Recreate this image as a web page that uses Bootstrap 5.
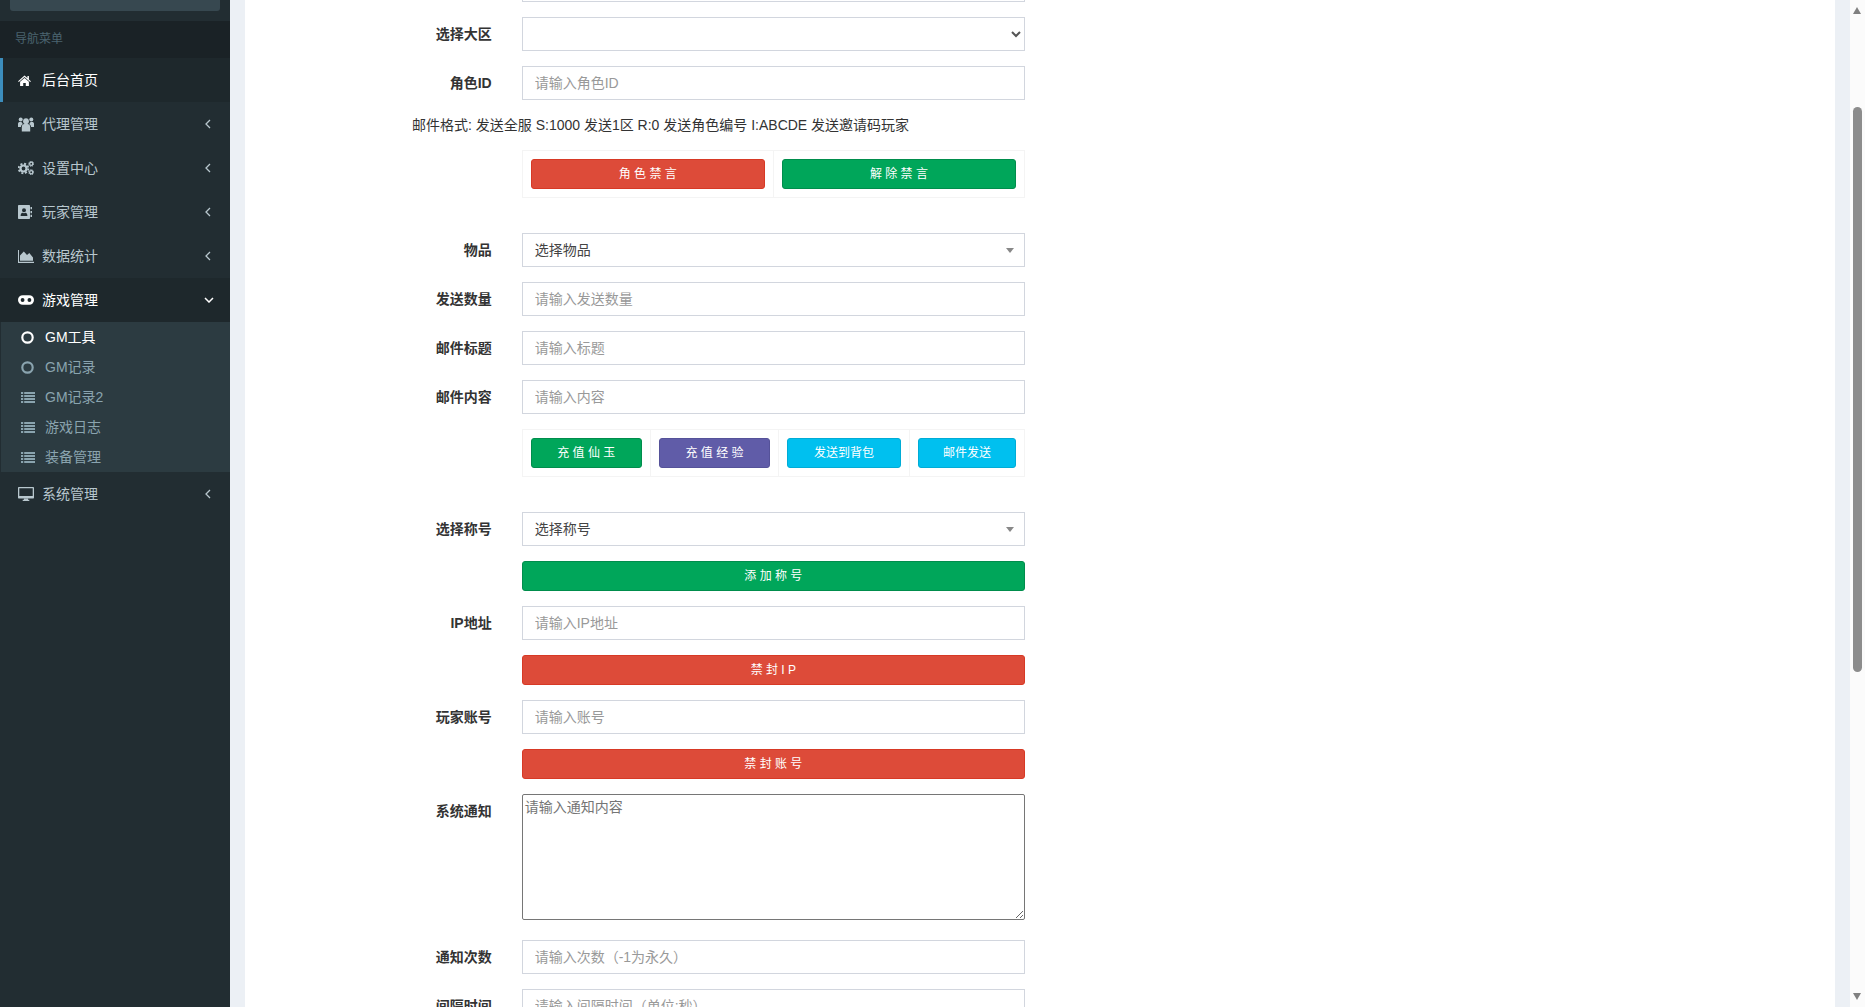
<!DOCTYPE html>
<html lang="zh-CN">
<head>
<meta charset="utf-8">
<title>GM工具</title>
<link href="https://cdn.jsdelivr.net/npm/bootstrap@5.3.0/dist/css/bootstrap.min.css" rel="stylesheet">
<style>
html,body{height:100%;overflow:hidden}
body{font-family:"Liberation Sans","Noto Sans CJK SC",sans-serif;font-size:14px;line-height:20px;color:#333;background:#ecf0f5}
.app-shell{height:1007px;overflow:hidden}
.side-rail{width:230px;flex:none;background:#222d32}
.side-search{height:34px;margin:-23px 10px 10px;background:#374850;border-radius:3px}
.side-head{background:#1a2226;color:#4b646f;font-size:12px;line-height:17px;padding:10px 25px 10px 15px}
.side-list{list-style:none;margin:0;padding:0}
.side-link{height:44px;padding:12px 0 12px 15px;color:#b8c7ce;text-decoration:none;border-left:3px solid transparent;margin:0}
.side-link.is-current{background:#1e282c;color:#fff;border-left-color:#3c8dbc}
.side-link.is-open{background:#1e282c;color:#fff;border-left-color:#1e282c}
.ico-box{width:24px;flex:none;display:flex;align-items:center}
.ico-box svg{display:block;fill:currentColor}
.side-arrow{margin-left:auto;margin-right:19px;display:block}
.side-arrow.is-down{margin-right:16px}
.sub-list{list-style:none;margin:0 0 0 1px;padding:0;background:#2c3b41}
.sub-link{height:30px;padding:5px 5px 5px 20px;color:#8aa4af;text-decoration:none}
.sub-link.is-current{color:#fff}
.main-gutter{padding:0 15px;min-width:0;background:#ecf0f5}
.work-box{background:#fff;padding:0 10px;height:1007px;overflow:hidden}
.work-form{margin-top:-32px}
.work-form .row{--bs-gutter-x:30px;margin-bottom:15px}
.field-label{font-weight:700;text-align:right;padding-top:7px;margin:0;color:#333}
.field-input.form-control{height:34px;border-radius:0;border:1px solid #d2d6de;padding:6px 12px;font-size:14px;line-height:20px;color:#444;box-shadow:none}
.field-input::placeholder{color:#999;opacity:1}
select.field-input.form-control{appearance:auto;padding:6px 8px;background:#fff;color:#555}
.fake-select{display:flex;align-items:center;justify-content:space-between;padding-right:10px}
.field-input.fake-select.form-control{padding-right:10px}
.fake-caret{width:0;height:0;border-style:solid;border-width:5px 4px 0;border-color:#888 transparent transparent}
.mail-hint{margin:0 0 15px;padding-left:157px}
.btn-table{--bs-table-border-color:#f4f4f4;border-color:#f4f4f4;margin-bottom:20px}
.btn-table td{padding:8px;vertical-align:top}
.act-btn{display:block;width:100%;height:30px;padding:5px 10px;font-size:12px;line-height:18px;border-radius:3px;color:#fff;white-space:nowrap}
.act-red{background:#dd4b39;border:1px solid #d73925}
.act-green{background:#00a65a;border:1px solid #008d4c}
.act-purple{background:#605ca8;border:1px solid #555299}
.act-cyan{background:#00c0ef;border:1px solid #00acd6}
.act-btn:hover{color:#fff}
.notice-area{display:block;width:100%;height:126px;padding:2px;margin-bottom:5px;border:1px solid #767676;border-radius:2px;font-size:14px;line-height:20px;color:#333}
.notice-area::placeholder{color:#757575;opacity:1}
.fake-scroll{width:15px;flex:none;background:#fbfbfb;height:1007px;padding:7px 3px}
.scroll-up{width:0;height:0;border-style:solid;border-width:0 4.5px 7px;border-color:transparent transparent #808080}
.scroll-down{width:0;height:0;border-style:solid;border-width:7px 4.5px 0;border-color:#808080 transparent transparent}
.scroll-thumb{width:9px;height:565px;margin-top:93px;margin-bottom:auto;background:#8c8c8c;border-radius:5px}
</style>
</head>
<body>
<svg width="0" height="0" class="d-none">
  <symbol id="i-home" viewBox="0 0 14 12"><path d="M7 .6 0 6.7l.8.9L7 2.200l6.200 5.400.8-.9-2.200-1.900V1.200h-1.600v2.200zM2.200 7.400 7 3.200l4.800 4.200V12H8.400V8.600H5.600V12H2.200z"/></symbol>
  <symbol id="i-users" viewBox="0 0 16 15"><circle cx="8" cy="4.200" r="2.900"/><circle cx="2.700" cy="2.400" r="2"/><circle cx="13.300" cy="2.400" r="2"/><path d="M3.800 14.500V10c0-2 1.200-3 2.600-3h3.200c1.400 0 2.600 1 2.600 3v4.500zM0 10V6.700C0 5.600.8 5 2 5h1.500c.3 1 .9 1.600 1.500 2-1.300.5-2 1.500-2.100 3zM16 10V6.700C16 5.600 15.200 5 14 5h-1.500c-.3 1-.9 1.600-1.500 2 1.300.5 2 1.500 2.100 3z"/></symbol>
  <symbol id="i-cogs" viewBox="0 0 16 14"><g fill="none" stroke="currentColor"><circle cx="5.500" cy="7.500" r="3" stroke-width="2.200"/><circle cx="5.500" cy="7.500" r="4.800" stroke-width="1.800" stroke-dasharray="2 1.770"/><circle cx="13.200" cy="2.800" r="1.600" stroke-width="1.300"/><circle cx="13.200" cy="2.800" r="2.500" stroke-width="1" stroke-dasharray="1.200 .76"/><circle cx="13.200" cy="11.200" r="1.600" stroke-width="1.300"/><circle cx="13.200" cy="11.200" r="2.500" stroke-width="1" stroke-dasharray="1.200 .76"/></g></symbol>
  <symbol id="i-book" viewBox="0 0 14 14"><path fill-rule="evenodd" d="M1 0h10c.6 0 1 .4 1 1v12c0 .6-.4 1-1 1H1c-.6 0-1-.4-1-1V1c0-.6.4-1 1-1zM6 3.300a2 2 0 1 0 0 4 2 2 0 0 0 0-4zM2.600 11h6.800c0-2-1-3.200-2-3.200-.4.300-.9.500-1.400.500s-1-.2-1.400-.5c-1 0-2 1.200-2 3.200z"/><path d="M12.500 2H14v2.300h-1.500zM12.500 5.900H14v2.300h-1.500zM12.500 9.800H14v2.300h-1.500z"/></symbol>
  <symbol id="i-area" viewBox="0 0 16 13"><path d="M0 0h1v11.800h15V13H0z"/><path d="M2 10.800V5.500L5.800 1.500 9 5l2.300-2L15 7.500v3.300z"/></symbol>
  <symbol id="i-pad" viewBox="0 0 15 9"><path fill-rule="evenodd" d="M4.500 0h6a4.500 4.500 0 0 1 0 9h-6a4.500 4.500 0 0 1 0-9zM4.300 2.700a1.800 1.800 0 1 0 0 3.600 1.800 1.800 0 0 0 0-3.600zM10.700 2.700a1.800 1.800 0 1 0 0 3.600 1.800 1.800 0 0 0 0-3.600z"/></symbol>
  <symbol id="i-ring" viewBox="0 0 12 12"><circle cx="6" cy="6" r="4.800" fill="none" stroke="currentColor" stroke-width="2"/></symbol>
  <symbol id="i-list" viewBox="0 0 14 11"><path d="M0 0h2.200v2H0zM3.200 0H14v2H3.200zM0 3h2.200v2H0zM3.200 3H14v2H3.200zM0 6h2.200v2H0zM3.200 6H14v2H3.200zM0 9h2.200v2H0zM3.200 9H14v2H3.200z"/></symbol>
  <symbol id="i-screen" viewBox="0 0 16 14"><path fill-rule="evenodd" d="M1 0h14c.6 0 1 .4 1 1v9.500c0 .6-.4 1-1 1H1c-.6 0-1-.4-1-1V1c0-.6.4-1 1-1zM1.300 1.300v7.700h13.400V1.300z"/><path d="M6 11.500h4v1.300h1.300V14H4.700v-1.200H6z"/></symbol>
  <symbol id="i-left" viewBox="0 0 6 10"><path d="M5 1 1 5l4 4" fill="none" stroke="currentColor" stroke-width="1.300"/></symbol>
  <symbol id="i-down" viewBox="0 0 10 6"><path d="M1 1l4 4 4-4" fill="none" stroke="currentColor" stroke-width="1.500"/></symbol>
</svg>
<div class="app-shell d-flex">
  <aside class="side-rail">
    <div class="side-search"></div>
    <div class="side-head">导航菜单</div>
    <ul class="side-list">
      <li><a class="side-link is-current d-flex align-items-center" href="#"><span class="ico-box"><svg width="13" height="11"><use href="#i-home"/></svg></span>后台首页</a></li>
      <li><a class="side-link d-flex align-items-center" href="#"><span class="ico-box"><svg width="16" height="15"><use href="#i-users"/></svg></span>代理管理<svg class="side-arrow" width="6" height="10"><use href="#i-left"/></svg></a></li>
      <li><a class="side-link d-flex align-items-center" href="#"><span class="ico-box"><svg width="16" height="14"><use href="#i-cogs"/></svg></span>设置中心<svg class="side-arrow" width="6" height="10"><use href="#i-left"/></svg></a></li>
      <li><a class="side-link d-flex align-items-center" href="#"><span class="ico-box"><svg width="14" height="14"><use href="#i-book"/></svg></span>玩家管理<svg class="side-arrow" width="6" height="10"><use href="#i-left"/></svg></a></li>
      <li><a class="side-link d-flex align-items-center" href="#"><span class="ico-box"><svg width="16" height="13"><use href="#i-area"/></svg></span>数据统计<svg class="side-arrow" width="6" height="10"><use href="#i-left"/></svg></a></li>
      <li><a class="side-link is-open d-flex align-items-center" href="#"><span class="ico-box"><svg width="16" height="10"><use href="#i-pad"/></svg></span>游戏管理<svg class="side-arrow is-down" width="10" height="6"><use href="#i-down"/></svg></a>
        <ul class="sub-list">
          <li><a class="sub-link is-current d-flex align-items-center" href="#"><span class="ico-box"><svg width="13" height="13"><use href="#i-ring"/></svg></span>GM工具</a></li>
          <li><a class="sub-link d-flex align-items-center" href="#"><span class="ico-box"><svg width="13" height="13"><use href="#i-ring"/></svg></span>GM记录</a></li>
          <li><a class="sub-link d-flex align-items-center" href="#"><span class="ico-box"><svg width="14" height="11"><use href="#i-list"/></svg></span>GM记录2</a></li>
          <li><a class="sub-link d-flex align-items-center" href="#"><span class="ico-box"><svg width="14" height="11"><use href="#i-list"/></svg></span>游戏日志</a></li>
          <li><a class="sub-link d-flex align-items-center" href="#"><span class="ico-box"><svg width="14" height="11"><use href="#i-list"/></svg></span>装备管理</a></li>
        </ul>
      </li>
      <li><a class="side-link d-flex align-items-center" href="#"><span class="ico-box"><svg width="16" height="14"><use href="#i-screen"/></svg></span>系统管理<svg class="side-arrow" width="6" height="10"><use href="#i-left"/></svg></a></li>
    </ul>
  </aside>
  <div class="main-gutter flex-grow-1">
    <div class="work-box">
      <form class="work-form">
        <div class="row"><label class="col-2 field-label">&nbsp;</label><div class="col-4"><input class="form-control field-input"></div></div>
        <div class="row"><label class="col-2 field-label">选择大区</label><div class="col-4"><select class="form-control field-input"><option></option></select></div></div>
        <div class="row"><label class="col-2 field-label">角色ID</label><div class="col-4"><input class="form-control field-input" placeholder="请输入角色ID"></div></div>
        <p class="mail-hint">邮件格式: 发送全服 S:1000 发送1区 R:0 发送角色编号 I:ABCDE 发送邀请码玩家</p>
        <div class="row"><div class="col-2"></div><div class="col-4">
          <table class="table table-bordered btn-table"><tbody><tr>
            <td><button type="button" class="btn act-btn act-red">角 色 禁 言</button></td>
            <td><button type="button" class="btn act-btn act-green">解 除 禁 言</button></td>
          </tr></tbody></table>
        </div></div>
        <div class="row"><label class="col-2 field-label">物品</label><div class="col-4"><div class="form-control field-input fake-select"><span>选择物品</span><span class="fake-caret"></span></div></div></div>
        <div class="row"><label class="col-2 field-label">发送数量</label><div class="col-4"><input class="form-control field-input" placeholder="请输入发送数量"></div></div>
        <div class="row"><label class="col-2 field-label">邮件标题</label><div class="col-4"><input class="form-control field-input" placeholder="请输入标题"></div></div>
        <div class="row"><label class="col-2 field-label">邮件内容</label><div class="col-4"><input class="form-control field-input" placeholder="请输入内容"></div></div>
        <div class="row"><div class="col-2"></div><div class="col-4">
          <table class="table table-bordered btn-table"><tbody><tr>
            <td><button type="button" class="btn act-btn act-green">充 值 仙 玉</button></td>
            <td><button type="button" class="btn act-btn act-purple">充 值 经 验</button></td>
            <td><button type="button" class="btn act-btn act-cyan">发送到背包</button></td>
            <td><button type="button" class="btn act-btn act-cyan">邮件发送</button></td>
          </tr></tbody></table>
        </div></div>
        <div class="row"><label class="col-2 field-label">选择称号</label><div class="col-4"><div class="form-control field-input fake-select"><span>选择称号</span><span class="fake-caret"></span></div></div></div>
        <div class="row"><div class="col-2"></div><div class="col-4"><button type="button" class="btn act-btn act-green">添 加 称 号</button></div></div>
        <div class="row"><label class="col-2 field-label">IP地址</label><div class="col-4"><input class="form-control field-input" placeholder="请输入IP地址"></div></div>
        <div class="row"><div class="col-2"></div><div class="col-4"><button type="button" class="btn act-btn act-red">禁 封 I P</button></div></div>
        <div class="row"><label class="col-2 field-label">玩家账号</label><div class="col-4"><input class="form-control field-input" placeholder="请输入账号"></div></div>
        <div class="row"><div class="col-2"></div><div class="col-4"><button type="button" class="btn act-btn act-red">禁 封 账 号</button></div></div>
        <div class="row"><label class="col-2 field-label">系统通知</label><div class="col-4"><textarea class="notice-area" placeholder="请输入通知内容"></textarea></div></div>
        <div class="row"><label class="col-2 field-label">通知次数</label><div class="col-4"><input class="form-control field-input" placeholder="请输入次数（-1为永久）"></div></div>
        <div class="row"><label class="col-2 field-label">间隔时间</label><div class="col-4"><input class="form-control field-input" placeholder="请输入间隔时间（单位:秒）"></div></div>
      </form>
    </div>
  </div>
  <div class="fake-scroll d-flex flex-column">
    <div class="scroll-up"></div>
    <div class="scroll-thumb"></div>
    <div class="scroll-down"></div>
  </div>
</div>
<script src="https://cdn.jsdelivr.net/npm/bootstrap@5.3.0/dist/js/bootstrap.bundle.min.js"></script>
</body>
</html>
